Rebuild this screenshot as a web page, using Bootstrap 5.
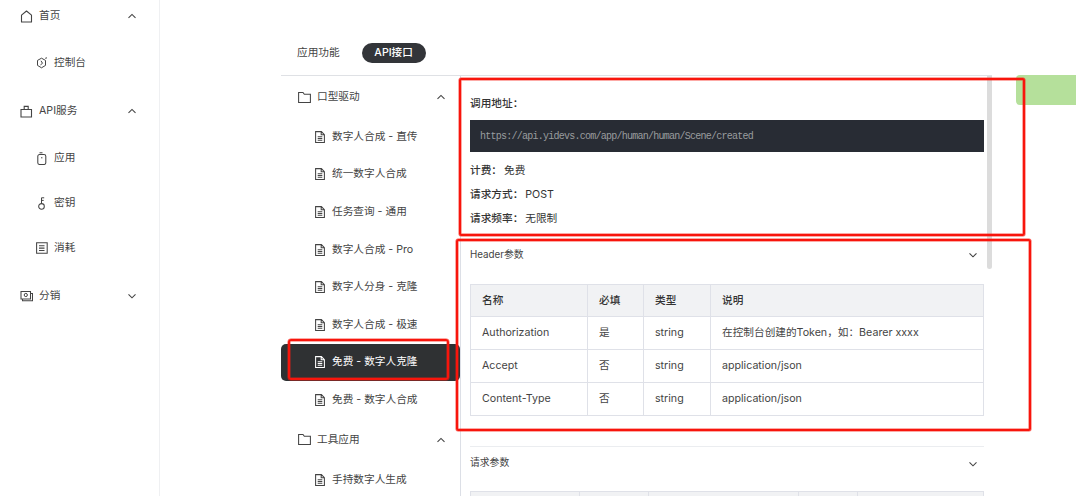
<!DOCTYPE html>
<html lang="zh-CN">
<head>
<meta charset="utf-8">
<title>API</title>
<link href="https://cdn.jsdelivr.net/npm/bootstrap@5.3.0/dist/css/bootstrap.min.css" rel="stylesheet">
<style>
html,body{height:496px;overflow:hidden;background:#fff}
body{font-family:Inter,"Noto Sans CJK SC",sans-serif;font-size:10.67px;color:#333;line-height:1.5}
svg{display:block;flex:none;fill:none;stroke:currentColor}
.page-wrap{position:relative;width:1076px;height:496px;overflow:hidden}
.ico-gap{margin-right:6px}
.side-col{width:160px;height:496px;border-right:1px solid #eff0f2;flex:none}
.side-row{height:45px;color:#444;padding-right:22px}
.side-top{padding-left:20px;margin-top:3px}
.side-sub{padding-left:36px}
.side-sub-first{margin-top:2px}
.side-first{height:32px;margin-top:0;margin-bottom:8.5px}
.mid-area{width:121px;flex:none}
.api-col{width:711px;flex:none}
.tab-row{height:75px;padding:43px 0 0 16px;gap:22px}
.tab-pill{background:#333539;color:#fff;border-radius:10px;height:20px;width:64px;justify-content:center;display:flex;align-items:center;font-weight:500}
.tab-plain{height:20px;display:flex;align-items:center;color:#444}
.api-body{border-top:1px solid #dfe1e5;height:421px}
.tree-col{width:180px;flex:none;border-right:1px solid #dcdfe6;height:421px}
.tree-row{height:37.6px;color:#444;padding-right:14px}
.tree-head{padding-left:17px;height:42px}
.tree-item{padding-left:33px}
.tree-active{background:#2f3133;color:#fff;border-radius:5px}
.doc-col{width:531px;flex:none;position:relative;padding:0 8px 0 9px}
.info-line{height:24px;font-weight:500;color:#333}
.info-line span{font-weight:400;margin-left:2px}
.url-bar{background:#282c34;color:#9a9d9f;height:32px;margin-top:4px;margin-bottom:7px;padding-left:10px;font-family:"Liberation Mono",monospace;font-size:10px;letter-spacing:-.75px}
.sec-head{height:37px;margin-bottom:10.5px;color:#444;font-size:9.8px}
.sec-first{margin-top:5.5px}
.sec-second{height:33px}
.chev-end{margin-right:6px}
.api-grid{--bs-table-border-color:#dfe1e8;--bs-table-color:#444;font-size:10.67px;margin:0;table-layout:fixed;width:514px}
.api-grid th,.api-grid td{padding:0 0 0 11px;height:33px;vertical-align:middle;line-height:1.3;color:#444}
.api-grid th{background:#f1f2f4;font-weight:500;color:#333;height:32px}
.sec-rule{border-top:1px solid #ebedf0;margin-top:30px}
.scroll-thumb{position:absolute;left:526px;top:0;width:5px;height:193px;background:#dcdcdc;border-radius:0 0 3px 3px}
.green-tag{position:absolute;left:1016px;top:75px;width:60px;height:30px;background:#b5e09b;border-radius:4px 0 0 4px}
.mark-box{position:absolute;border:2px solid #f8150c;border-radius:2px;pointer-events:none;box-shadow:0 0 0 .5px rgba(248,30,20,.75),inset 0 0 0 .5px rgba(248,30,20,.75)}
.mark-a{left:459px;top:78px;width:566px;height:158px}
.mark-b{left:456px;top:239px;width:575px;height:192px}
.mark-c{left:288px;top:339px;width:161px;height:41px;border-radius:3px}
</style>
</head>
<body>
<svg width="0" height="0" style="position:absolute">
<defs>
<symbol id="i-up" viewBox="0 0 10 10"><path d="M1.5 6.8 5 3.4l3.5 3.4" stroke-width="1.1"/></symbol>
<symbol id="i-down" viewBox="0 0 10 10"><path d="M1.5 3.4 5 6.8l3.5-3.4" stroke-width="1.1"/></symbol>
<symbol id="i-doc" viewBox="0 0 12 12"><path d="M1.6.6h5.8l3 3v7.900H1.600zM7.200.8v3h3M3.700 5.700h4.600M3.700 7.500h4.600M3.700 9.300h4.600" stroke-width="1.050"/></symbol>
<symbol id="i-folder" viewBox="0 0 13 13"><path d="M.6 1.500h4.400l1.300 1.800h6.100v8.200H.6z" stroke-width="1.050"/></symbol>
</defs>
</svg>
<div class="page-wrap d-flex">
  <aside class="side-col">
    <div class="side-row side-top side-first d-flex align-items-center">
      <svg width="13" height="13" viewBox="0 0 13 13" class="ico-gap"><path d="M1.500 12V5.200L6.500 1l5 4.200V12z" stroke-width="1.100" stroke-linejoin="round"/></svg>
      <span class="flex-grow-1">首页</span><svg width="10" height="10"><use href="#i-up"/></svg>
    </div>
    <div class="side-row side-sub d-flex align-items-center">
      <svg width="12" height="12" viewBox="0 0 12 12" class="ico-gap"><path d="M5.500 1.200 9.500 3.400v5L5.500 10.800 1.500 8.400v-5zM4.500 7.800l2-1.500-1.500-2.500M9.200 1.300l1.800-.5" stroke-width="1"/></svg>
      <span>控制台</span>
    </div>
    <div class="side-row side-top d-flex align-items-center">
      <svg width="13" height="13" viewBox="0 0 13 13" class="ico-gap"><path d="M1 4.500h10.500V12H1zM4.200 4.500V1.400h4v3.100" stroke-width="1.100"/></svg>
      <span class="flex-grow-1">API服务</span><svg width="10" height="10"><use href="#i-up"/></svg>
    </div>
    <div class="side-row side-sub side-sub-first d-flex align-items-center">
      <svg width="12" height="13" viewBox="0 0 12 13" class="ico-gap"><rect x="1.800" y="2.500" width="8" height="10" rx="1.800" stroke-width="1.050"/><path d="M3.500.8h3M5.800 5v1.400" stroke-width="1"/></svg>
      <span>应用</span>
    </div>
    <div class="side-row side-sub d-flex align-items-center">
      <svg width="12" height="13" viewBox="0 0 12 13" class="ico-gap"><circle cx="5.500" cy="9.400" r="2.800" stroke-width="1.050"/><path d="M5.500 6.600V.8h2.700M5.500 3.400h2.200" stroke-width="1"/></svg>
      <span>密钥</span>
    </div>
    <div class="side-row side-sub d-flex align-items-center">
      <svg width="12" height="12" viewBox="0 0 12 12" class="ico-gap"><path d="M.6.8h10.600v10.500H.6zM3 3.800h5.500M3 6.100h5.500M3 8.500h5.500" stroke-width="1.050"/></svg>
      <span>消耗</span>
    </div>
    <div class="side-row side-top d-flex align-items-center">
      <svg width="13" height="13" viewBox="0 0 13 13" class="ico-gap"><path d="M1 1.500h9.500v7.500H1zM2.500 9v1.800h10V3.500h-2" stroke-width="1.050"/><circle cx="5.800" cy="5" r="1.600" stroke-width="1"/></svg>
      <span class="flex-grow-1">分销</span><svg width="10" height="10"><use href="#i-down"/></svg>
    </div>
  </aside>
  <div class="mid-area"></div>
  <main class="api-col">
    <div class="tab-row d-flex align-items-start">
      <div class="tab-plain">应用功能</div>
      <div class="tab-pill">API接口</div>
    </div>
    <div class="api-body d-flex">
      <nav class="tree-col">
        <div class="tree-row tree-head d-flex align-items-center"><svg width="13" height="13" class="ico-gap"><use href="#i-folder"/></svg><span class="flex-grow-1">口型驱动</span><svg width="10" height="10"><use href="#i-up"/></svg></div>
        <div class="tree-row tree-item d-flex align-items-center"><svg width="12" height="12" class="ico-gap"><use href="#i-doc"/></svg>数字人合成 - 直传</div>
        <div class="tree-row tree-item d-flex align-items-center"><svg width="12" height="12" class="ico-gap"><use href="#i-doc"/></svg>统一数字人合成</div>
        <div class="tree-row tree-item d-flex align-items-center"><svg width="12" height="12" class="ico-gap"><use href="#i-doc"/></svg>任务查询 - 通用</div>
        <div class="tree-row tree-item d-flex align-items-center"><svg width="12" height="12" class="ico-gap"><use href="#i-doc"/></svg>数字人合成 - Pro</div>
        <div class="tree-row tree-item d-flex align-items-center"><svg width="12" height="12" class="ico-gap"><use href="#i-doc"/></svg>数字人分身 - 克隆</div>
        <div class="tree-row tree-item d-flex align-items-center"><svg width="12" height="12" class="ico-gap"><use href="#i-doc"/></svg>数字人合成 - 极速</div>
        <div class="tree-row tree-item tree-active d-flex align-items-center"><svg width="12" height="12" class="ico-gap"><use href="#i-doc"/></svg>免费 - 数字人克隆</div>
        <div class="tree-row tree-item d-flex align-items-center"><svg width="12" height="12" class="ico-gap"><use href="#i-doc"/></svg>免费 - 数字人合成</div>
        <div class="tree-row tree-head d-flex align-items-center"><svg width="13" height="13" class="ico-gap"><use href="#i-folder"/></svg><span class="flex-grow-1">工具应用</span><svg width="10" height="10"><use href="#i-up"/></svg></div>
        <div class="tree-row tree-item d-flex align-items-center"><svg width="12" height="12" class="ico-gap"><use href="#i-doc"/></svg>手持数字人生成</div>
      </nav>
      <section class="doc-col">
        <div class="info-line d-flex align-items-center mt-3">调用地址：</div>
        <div class="url-bar d-flex align-items-center">https://api.yidevs.com/app/human/human/Scene/created</div>
        <div class="info-line d-flex align-items-center">计费：<span>免费</span></div>
        <div class="info-line d-flex align-items-center">请求方式：<span>POST</span></div>
        <div class="info-line d-flex align-items-center">请求频率：<span>无限制</span></div>
        <div class="sec-head sec-first d-flex align-items-center justify-content-between"><span>Header参数</span><svg width="10" height="10" class="chev-end"><use href="#i-down"/></svg></div>
        <table class="table table-bordered api-grid">
          <colgroup><col style="width:117px"><col style="width:56px"><col style="width:67px"><col></colgroup>
          <thead><tr><th>名称</th><th>必填</th><th>类型</th><th>说明</th></tr></thead>
          <tbody>
            <tr><td>Authorization</td><td>是</td><td>string</td><td>在控制台创建的Token，如：Bearer xxxx</td></tr>
            <tr><td>Accept</td><td>否</td><td>string</td><td>application/json</td></tr>
            <tr><td>Content-Type</td><td>否</td><td>string</td><td>application/json</td></tr>
          </tbody>
        </table>
        <div class="sec-rule"></div>
        <div class="sec-head sec-second d-flex align-items-center justify-content-between"><span>请求参数</span><svg width="10" height="10" class="chev-end"><use href="#i-down"/></svg></div>
        <table class="table table-bordered api-grid">
          <colgroup><col style="width:109px"><col style="width:69px"><col style="width:150px"><col style="width:59px"><col></colgroup>
          <thead><tr><th></th><th></th><th></th><th></th><th></th></tr></thead>
        </table>
        <div class="scroll-thumb"></div>
      </section>
    </div>
  </main>
  <div class="green-tag"></div>
  <div class="mark-box mark-a"></div>
  <div class="mark-box mark-b"></div>
  <div class="mark-box mark-c"></div>
</div>
<script src="https://cdn.jsdelivr.net/npm/bootstrap@5.3.0/dist/js/bootstrap.bundle.min.js"></script>
</body>
</html>
